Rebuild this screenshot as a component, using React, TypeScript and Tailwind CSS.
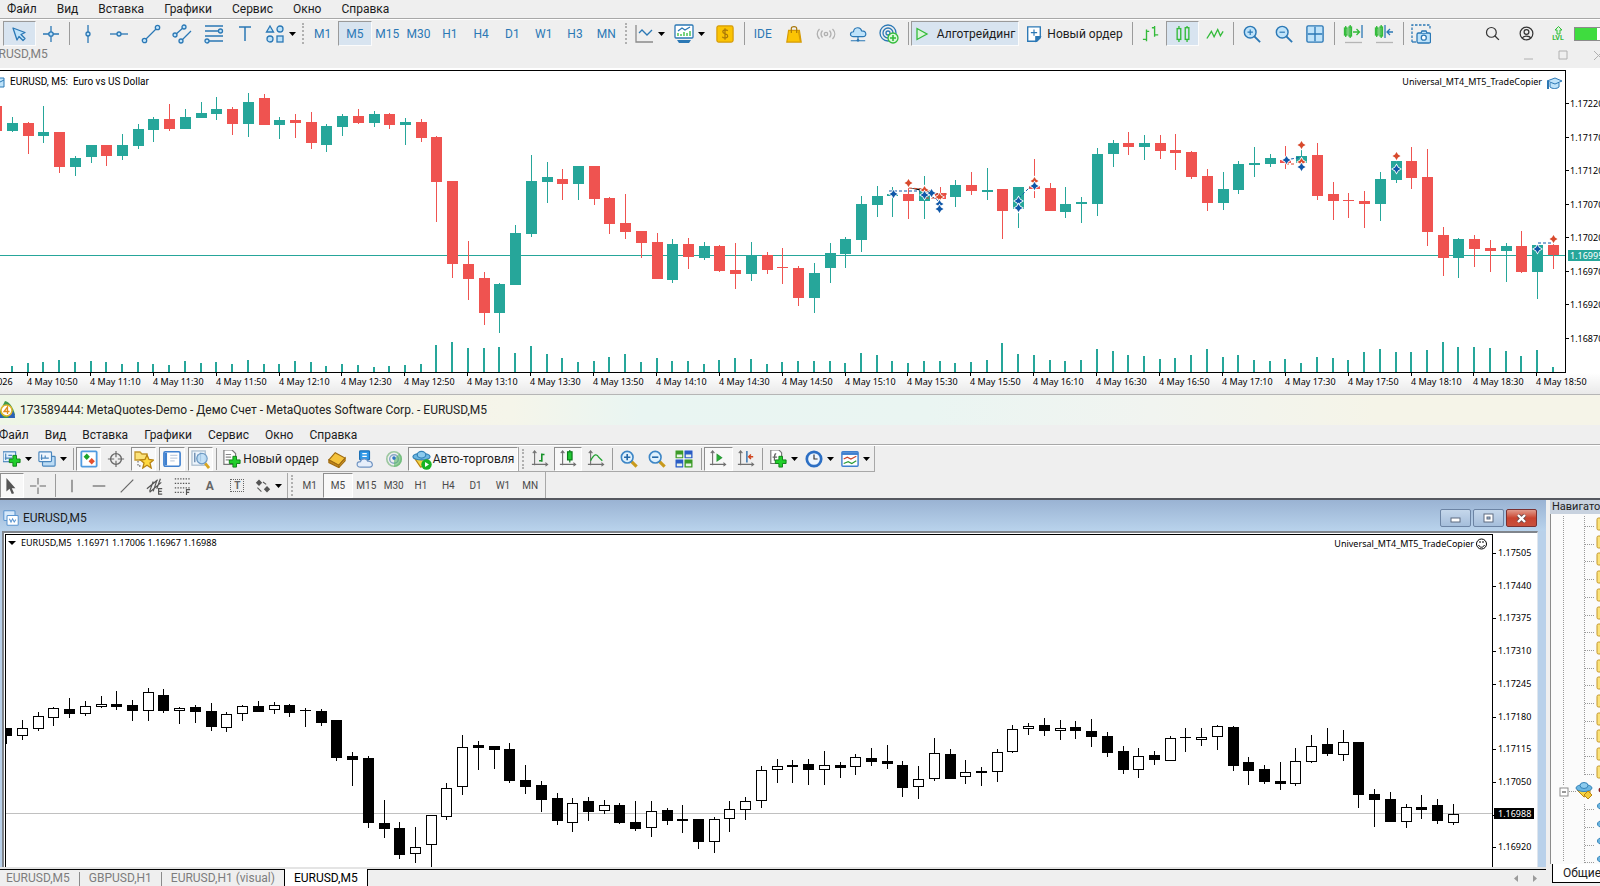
import { ReactNode } from "react";

type Candle = [number, number, number, number, string];

// [high, body top, body bottom, low, "u" | "d"]
const mt5Candles: Candle[] = [
  [106, 106, 131, 131, "d"], [117, 123, 131, 132, "u"], [122, 123, 136, 154, "d"], [106, 132, 136, 143, "u"],
  [132, 132, 167, 173, "d"], [156, 158, 167, 176, "u"], [145, 145, 157, 163, "u"], [145, 145, 156, 166, "d"],
  [134, 145, 156, 160, "u"], [124, 129, 146, 149, "u"], [117, 119, 130, 142, "u"], [104, 119, 129, 131, "d"],
  [109, 117, 129, 129, "u"], [102, 113, 118, 118, "u"], [97, 109, 114, 120, "u"], [107, 109, 124, 135, "d"],
  [93, 102, 124, 137, "u"], [94, 98, 125, 125, "d"], [117, 120, 125, 139, "u"], [114, 120, 123, 138, "d"],
  [112, 122, 143, 149, "d"], [124, 126, 145, 152, "u"], [114, 116, 127, 136, "u"], [109, 116, 123, 124, "d"],
  [111, 114, 123, 127, "u"], [113, 114, 125, 129, "d"], [118, 122, 125, 145, "u"], [119, 122, 138, 142, "d"],
  [136, 137, 182, 222, "d"], [181, 181, 264, 278, "d"], [241, 264, 279, 300, "d"], [272, 278, 313, 325, "d"],
  [283, 284, 313, 333, "u"], [225, 233, 285, 285, "u"], [155, 181, 234, 237, "u"], [162, 177, 182, 203, "u"],
  [169, 179, 184, 200, "d"], [166, 166, 184, 200, "u"], [166, 166, 199, 205, "d"], [197, 198, 224, 234, "d"],
  [194, 223, 232, 239, "d"], [231, 231, 243, 258, "d"], [233, 242, 279, 279, "d"], [239, 244, 280, 283, "u"],
  [238, 244, 257, 269, "d"], [242, 246, 258, 260, "u"], [245, 246, 271, 272, "d"], [243, 270, 274, 289, "d"],
  [242, 255, 274, 281, "u"], [252, 255, 270, 274, "d"], [248, 267, 268, 284, "d"], [266, 268, 298, 306, "d"],
  [263, 273, 298, 313, "u"], [243, 253, 268, 283, "u"], [237, 239, 254, 268, "u"], [196, 204, 240, 252, "u"],
  [186, 196, 205, 217, "u"], [187, 194, 196, 217, "u"], [185, 194, 201, 219, "d"], [176, 190, 201, 219, "u"],
  [187, 193, 199, 203, "d"], [180, 185, 197, 207, "u"], [172, 185, 191, 195, "d"], [168, 190, 192, 200, "u"],
  [189, 189, 211, 239, "d"], [187, 187, 209, 228, "u"], [159, 186, 189, 198, "d"], [183, 188, 211, 211, "d"],
  [187, 204, 212, 218, "u"], [197, 202, 204, 223, "u"], [148, 154, 204, 216, "u"], [140, 143, 154, 167, "u"],
  [132, 143, 147, 155, "d"], [135, 143, 147, 160, "u"], [135, 143, 151, 159, "d"], [134, 150, 153, 170, "d"],
  [151, 152, 177, 179, "d"], [169, 176, 203, 211, "d"], [172, 189, 203, 210, "u"], [161, 164, 190, 194, "u"],
  [147, 163, 165, 177, "u"], [154, 158, 164, 167, "u"], [146, 160, 163, 169, "d"], [149, 156, 163, 172, "u"],
  [143, 155, 196, 200, "d"], [182, 194, 201, 220, "d"], [193, 200, 201, 218, "d"], [191, 201, 204, 228, "d"],
  [172, 179, 204, 221, "u"], [158, 161, 180, 183, "u"], [147, 161, 178, 189, "d"], [149, 177, 232, 246, "d"],
  [227, 235, 258, 276, "d"], [238, 239, 258, 278, "u"], [235, 239, 249, 267, "d"], [240, 248, 251, 272, "d"],
  [243, 246, 251, 282, "u"], [231, 246, 272, 273, "d"], [244, 245, 272, 299, "u"], [242, 245, 255, 269, "d"],
];

const volumes = [
  6, 9, 10, 12, 10, 11, 10, 8, 10, 8, 7, 11, 9, 10, 8, 12, 8, 8, 11, 10, 6, 8, 7, 5, 6, 7, 8, 27, 30, 24, 24, 25, 19,
  26, 18, 14, 10, 11, 15, 18, 10, 14, 11, 11, 8, 12, 14, 13, 8, 10, 11, 11, 11, 9, 19, 17, 11, 9, 11, 11, 9, 10, 12,
  29, 18, 17, 12, 11, 12, 23, 21, 17, 16, 13, 14, 17, 23, 15, 17, 12, 11, 13, 9, 15, 14, 12, 20, 23, 20, 20, 22, 30,
  25, 25, 24, 21, 16, 22, 5,
];

const mt4Candles: Candle[] = [
  [728, 728, 736, 744, "d"], [720, 728, 736, 740, "u"], [712, 716, 729, 731, "u"], [707, 708, 718, 726, "u"],
  [698, 709, 714, 718, "d"], [701, 706, 714, 716, "u"], [696, 704, 706, 708, "u"], [691, 704, 707, 710, "d"],
  [700, 705, 711, 721, "d"], [688, 692, 711, 721, "u"], [689, 695, 711, 713, "d"], [707, 708, 711, 724, "u"],
  [705, 707, 712, 723, "d"], [703, 711, 727, 731, "d"], [712, 714, 728, 732, "u"], [705, 706, 714, 721, "u"],
  [701, 706, 712, 712, "d"], [702, 705, 710, 714, "u"], [704, 705, 713, 717, "d"], [708, 710, 711, 727, "d"],
  [709, 711, 723, 726, "d"], [720, 720, 758, 761, "d"], [752, 756, 760, 786, "d"], [756, 758, 823, 828, "d"],
  [800, 823, 829, 838, "d"], [822, 828, 855, 859, "d"], [827, 847, 854, 863, "u"], [815, 815, 845, 867, "u"],
  [783, 788, 817, 820, "u"], [735, 747, 787, 795, "u"], [741, 745, 748, 770, "d"], [746, 746, 750, 769, "d"],
  [743, 749, 781, 783, "d"], [765, 780, 787, 794, "d"], [781, 785, 800, 812, "d"], [793, 798, 821, 825, "d"],
  [798, 803, 823, 832, "u"], [797, 801, 812, 821, "d"], [800, 805, 811, 814, "u"], [803, 805, 823, 824, "d"],
  [801, 822, 829, 831, "d"], [801, 811, 828, 837, "u"], [808, 810, 821, 825, "d"], [805, 819, 821, 833, "d"],
  [819, 819, 842, 849, "d"], [817, 819, 842, 853, "u"], [801, 809, 819, 832, "u"], [797, 801, 810, 820, "u"],
  [766, 770, 801, 808, "u"], [759, 766, 770, 783, "u"], [760, 765, 767, 783, "d"], [759, 764, 770, 785, "d"],
  [751, 765, 770, 785, "u"], [762, 765, 768, 778, "d"], [754, 757, 767, 775, "u"], [748, 758, 762, 766, "d"],
  [745, 761, 764, 769, "d"], [761, 765, 788, 797, "d"], [766, 779, 787, 799, "u"], [738, 753, 779, 781, "u"],
  [749, 754, 779, 779, "d"], [760, 772, 777, 784, "u"], [767, 771, 773, 786, "d"], [749, 752, 772, 782, "u"],
  [725, 729, 752, 753, "u"], [723, 726, 729, 735, "u"], [718, 725, 731, 736, "d"], [720, 728, 730, 740, "u"],
  [721, 727, 731, 739, "d"], [719, 731, 737, 747, "d"], [732, 736, 753, 757, "d"], [746, 751, 770, 774, "d"],
  [748, 756, 770, 778, "u"], [751, 755, 760, 765, "d"], [736, 738, 761, 761, "u"], [728, 737, 738, 752, "d"],
  [728, 737, 739, 746, "u"], [725, 726, 737, 750, "u"], [726, 727, 766, 771, "d"], [757, 762, 771, 785, "d"],
  [765, 769, 782, 784, "d"], [762, 781, 784, 790, "d"], [748, 761, 784, 786, "u"], [735, 746, 762, 763, "u"],
  [728, 744, 754, 756, "d"], [730, 742, 755, 761, "u"], [742, 742, 795, 808, "d"], [789, 794, 800, 827, "d"],
  [792, 799, 822, 822, "d"], [804, 807, 822, 828, "u"], [795, 807, 810, 819, "d"], [799, 805, 821, 824, "d"],
  [804, 814, 823, 825, "u"],
];

// deals on the MT5 chart: [x, y, "b" | "s"]
const deals: [number, number, string][] = [
  [893, 194, "b"], [908, 183, "s"], [924, 190, "s"], [924, 195, "b"], [931, 193, "b"], [939, 197, "s"],
  [939, 204, "b"], [939, 209, "b"], [1018, 201, "b"], [1018, 208, "b"], [1034, 181, "s"], [1034, 186, "b"],
  [1286, 160, "b"], [1301, 145, "s"], [1301, 162, "s"], [1301, 167, "b"], [1396, 156, "s"], [1396, 169, "b"],
  [1537, 249, "b"], [1553, 239, "s"],
];

const menu = ["Файл", "Вид", "Вставка", "Графики", "Сервис", "Окно", "Справка"];
const mt5Frames = ["M1", "M5", "M15", "M30", "H1", "H4", "D1", "W1", "H3", "MN"];
const mt4Frames = ["M1", "M5", "M15", "M30", "H1", "H4", "D1", "W1", "MN"];
const times = Array.from({ length: 25 }, (_, i) => {
  const m = 10 * 60 + 50 + i * 20;
  return `4 May ${Math.floor(m / 60)}:${m % 60}`;
});
const mt5Prices = ["1.17220", "1.17170", "1.17120", "1.17070", "1.17020", "1.16970", "1.16920", "1.16870"];
const mt4Prices = ["1.17505", "1.17440", "1.17375", "1.17310", "1.17245", "1.17180", "1.17115", "1.17050", "", "1.16920"];

const STEP = 15.722;
const B = "#2b78b5";
const LB = "#bfe3fa";
const G = "#33bb3a";

/* ---------- icons ---------- */

function Icon({ s = 20, children }: { s?: number; children: ReactNode }) {
  return (
    <svg width={s} height={s} viewBox="0 0 20 20" fill="none" stroke={B} strokeWidth="1.3" className="shrink-0">
      {children}
    </svg>
  );
}

function Arrow() {
  return (
    <svg width="7" height="4" viewBox="0 0 7 4" className="shrink-0">
      <path d="M0 0H7L3.5 4Z" fill="#000" />
    </svg>
  );
}

const IcPointer = () => (
  <Icon><path d="M4 4L16 8.5L12 10.5L16 14.500L14 16.500L10 12.500L8 16Z" fill={LB} strokeLinejoin="round" /></Icon>
);
const IcCross = () => (
  <Icon><path d="M10 2V18M2 10H18" /><circle cx="10" cy="10" r="2.2" fill={LB} /></Icon>
);
const IcVLine = () => (
  <Icon><path d="M10 1V19" /><circle cx="10" cy="10" r="2" fill={LB} /></Icon>
);
const IcHLine = () => (
  <Icon><path d="M1 10H19" /><circle cx="10" cy="10" r="2" fill={LB} /></Icon>
);
const IcTrend = () => (
  <Icon><path d="M4 16L16 4" /><circle cx="3.500" cy="16.500" r="2.200" fill={LB} /><circle cx="16.500" cy="3.500" r="2.200" fill={LB} /></Icon>
);
const IcChannel = () => (
  <Icon>
    <path d="M3 11L12 3M9 17L19 7" />
    <circle cx="3" cy="11" r="2" fill={LB} /><circle cx="12" cy="3" r="2" fill={LB} /><circle cx="9" cy="17" r="2" fill={LB} />
  </Icon>
);
const IcFibo = () => (
  <Icon>
    <path d="M1 2H19M1 7H15M1 12H19M5 17H19" />
    <circle cx="16.500" cy="7" r="2" fill={LB} /><circle cx="3" cy="17" r="2" fill={LB} />
  </Icon>
);
const IcText = () => (
  <Icon><path d="M4 3H16M10 3V17" strokeWidth="1.500" /></Icon>
);
const IcShapes = () => (
  <Icon>
    <path d="M1.500 8L5 2L8.500 8Z" fill={LB} /><circle cx="15" cy="5" r="3" fill={LB} />
    <circle cx="5" cy="15" r="3" fill={LB} /><rect x="12" y="12" width="6" height="6" fill={LB} />
  </Icon>
);
const IcLineChart = () => (
  <Icon>
    <path d="M2 1V18H19" stroke="#8b8b8b" /><path d="M5 9L8 6L13 11L18 6" />
  </Icon>
);
const IcTemplate = () => (
  <Icon>
    <rect x="1" y="1" width="18" height="13" rx="1" fill="#fff" />
    <path d="M4 7L8 4L11 6L16 3" /><path d="M4 12V9M7 12V10M10 12V8M13 12V9M16 12V7" stroke={G} />
    <path d="M3 16H17L15 19H5Z" fill={B} stroke="none" />
  </Icon>
);
const IcDollar = () => (
  <Icon s={18}>
    <rect x="1" y="1" width="18" height="18" rx="2" fill="#fbc404" stroke="#d59a05" />
    <path d="M13 6.500C12 5 7.500 5 7.500 7.500C7.500 10.500 13 9 13 12.200C13 15 8 15 7 13M10 3.500V16.500" stroke="#a87608" />
  </Icon>
);
const IcBag = () => (
  <Icon s={18}>
    <path d="M4 6H16L18 19H2Z" fill="#fbc404" stroke="#d59a05" /><path d="M7 9V4C7 1 13 1 13 4V9" stroke="#a87608" />
    <path d="M15 7L17 18" stroke="#d59a05" />
  </Icon>
);
const IcSignal = () => (
  <Icon>
    <g stroke="#b0b0b0">
      <circle cx="10" cy="10" r="1.700" /><path d="M6.500 6.500C4.800 8.500 4.800 11.500 6.500 13.500M13.500 6.500C15.200 8.500 15.200 11.500 13.500 13.500" />
      <path d="M3.500 5C.5 8 .5 12 3.500 15M16.500 5C19.500 8 19.500 12 16.500 15" />
    </g>
  </Icon>
);
const IcCloud = () => (
  <Icon s={18}>
    <path d="M5 13C.5 13 .5 7.500 5 7.500C5.500 2 13 1.500 14 6.500C20 6.500 20 13 15.500 13Z" fill={LB} />
    <path d="M10 13V17M2 17.500H18" /><circle cx="10" cy="17" r="1.500" fill={B} stroke="none" />
  </Icon>
);
const IcTarget = () => (
  <Icon>
    <circle cx="9" cy="9" r="8" /><circle cx="9" cy="9" r="5" /><circle cx="9" cy="9" r="2" />
    <circle cx="14" cy="14" r="5" fill="#d9f7d9" stroke={G} /><path d="M14 11V17M11 14H17" stroke={G} strokeWidth="1.600" />
  </Icon>
);
const IcDoc = () => (
  <Icon s={18}>
    <path d="M3 2H17V14L13 18H3Z" fill="#fff" strokeWidth="1.500" /><path d="M17 13H12V18Z" fill={B} /><path d="M10 5V12M6.500 8.500H13.500" />
  </Icon>
);
const IcBars = () => (
  <Icon s={18}><path d="M5 5V18M1 16H5M5 7H8M14 1V13M11 3H14M14 11H18" stroke={G} strokeWidth="1.500" /></Icon>
);
const IcCandles = () => (
  <Icon s={18}>
    <g stroke={G} strokeWidth="1.500"><path d="M5.500 1V4M5.500 16V19M14.500 1V3M14.500 16V19" /><rect x="3.500" y="4" width="4" height="12" /><rect x="12.500" y="3" width="4" height="13" /></g>
  </Icon>
);
const IcZig = () => (
  <Icon s={18}><path d="M1 15L6 7L9 13L13 5L16 12L19 7" stroke={G} strokeWidth="1.500" /></Icon>
);
const IcZoom = ({ plus }: { plus?: boolean }) => (
  <Icon s={18}>
    <path d="M12.500 12.500L19 19" strokeWidth="2" /><circle cx="8" cy="8" r="6.500" fill={LB} strokeWidth="1.600" />
    <path d={plus ? "M8 5V11M5 8H11" : "M5 8H11"} />
  </Icon>
);
const IcGrid = () => (
  <Icon s={18}><rect x="1" y="1" width="18" height="18" rx="1.500" fill={LB} strokeWidth="1.500" /><path d="M10 2V18M2 10H18" strokeWidth="1.500" /></Icon>
);
const IcShift = ({ left }: { left?: boolean }) => (
  <Icon>
    <g stroke={G}><rect x="1.500" y="4" width="2.500" height="7" /><rect x="6" y="3" width="2.500" height="9" /><path d="M2.700 2V13M7.200 1V14" /></g>
    {left ? (
      <><path d="M11 1V14M19 8H13M16 5L13 8L16 11" /></>
    ) : (
      <><path d="M10 8H16M13.500 5L16.500 8L13.500 11" stroke={G} /><path d="M19 1V14" /></>
    )}
    <path d="M2 18.500H19" stroke="#b5b5b5" />
  </Icon>
);
const IcCamera = () => (
  <Icon s={20}>
    <path d="M1 18V1H19V6" strokeDasharray="2.500 1.500" /><path d="M1 18H5" />
    <rect x="6" y="9" width="13.500" height="10" rx="1.500" fill={LB} /><path d="M10 9L11 7H15L16 9" fill={LB} /><circle cx="12.800" cy="13.700" r="2.500" fill="#fff" />
  </Icon>
);

// chart axes used by the MT4 chart type icons
const Axes = () => <path d="M4 1V17M2 3.500L4 1L6 3.500M1 16H18M16 14L18.500 16L16 18" stroke="#707070" strokeWidth="1.200" />;

function Plus({ x = 13, y = 13 }: { x?: number; y?: number }) {
  return (
    <path
      d={`M${x - 2} ${y - 6}H${x + 2}V${y - 2}H${x + 6}V${y + 2}H${x + 2}V${y + 6}H${x - 2}V${y + 2}H${x - 6}V${y - 2}H${x - 2}Z`}
      fill="#21cf2b" stroke="#0b7d14" strokeWidth="1"
    />
  );
}

const Ic4New = () => (
  <Icon s={18}><rect x="0" y="2" width="14" height="11" fill="#e5f2fd" stroke="#4a86bd" /><path d="M3 4V11M2 9H10M6 6H10" stroke="#4a86bd" /><Plus y={12} /></Icon>
);
const Ic4Windows = () => (
  <Icon s={18}>
    <rect x="5" y="7" width="14" height="11" rx="1" fill="#bcdcf5" stroke="#4a86bd" /><rect x="1" y="2" width="14" height="11" rx="1" fill="#eff7fe" stroke="#4a86bd" />
    <path d="M4 5V11M3 9H12M8 6V9" stroke="#4a86bd" />
  </Icon>
);
const Ic4Market = () => (
  <Icon s={18}>
    <rect x="1.500" y="1.500" width="17" height="17" rx="1" fill="#fff" stroke="#4f9be0" strokeWidth="2" />
    <path d="M7.500 4L11 7.500L7.500 11L4 7.500Z" fill="#1ca42a" stroke="none" /><path d="M13 9L16.500 12.500L13 16L9.500 12.500Z" fill="#e4502d" stroke="none" />
  </Icon>
);
const Ic4Aim = () => (
  <Icon s={18}><circle cx="10" cy="10" r="6" stroke="#6a6a6a" strokeWidth="1.600" /><path d="M10 1V8M10 12V19M1 10H8M12 10H19" stroke="#6a6a6a" /></Icon>
);
const Ic4Folder = () => (
  <Icon s={20}>
    <path d="M1 3H6L8 5H13V11H1Z" fill="#fbe27a" stroke="#c4972b" /><path d="M4 12V17H8" stroke="#777" strokeDasharray="1.500 1.500" />
    <path d="M13 6L15 10.500L19.500 11L16 14L17.200 19L13 16.300L8.800 19L10 14L6.500 11L11 10.500Z" fill="#ffd940" stroke="#b98412" />
  </Icon>
);
const Ic4Terminal = () => (
  <Icon s={18}>
    <rect x="1" y="2" width="18" height="16" rx="1.500" fill="#fff" stroke="#3f80cf" strokeWidth="1.800" /><path d="M3 3V17" stroke="#3f80cf" strokeWidth="3" />
    <path d="M8 6H16M8 9H16M8 12H13" stroke="#c3cfe0" />
  </Icon>
);
const Ic4Tester = () => (
  <Icon s={19}>
    <rect x="1" y="1" width="14" height="15" fill="#edf4fb" stroke="#a9bccd" /><path d="M4 3V13M7 5V11M10 3V12" stroke="#5a7fa6" />
    <circle cx="11.500" cy="9" r="5.500" fill="#b9dcf6cc" stroke="#6f9bc4" /><path d="M15 14L19 19" stroke="#d9a520" strokeWidth="3" />
  </Icon>
);
const Ic4Order = () => (
  <Icon s={18}><path d="M1 0H10L14 4V16H1Z" fill="#fff" stroke="#777" /><path d="M3 5H9M3 8H9M3 11H7" stroke="#888" /><Plus y={13} /></Icon>
);
const Ic4Gold = () => (
  <Icon s={18}>
    <path d="M1 11L8 3L19 9L12 17Z" fill="#f5c33c" stroke="#9f6b10" /><path d="M1 11V14L12 19.500V17Z" fill="#c78a1c" stroke="#9f6b10" /><path d="M12 17L19 9V12L12 19.500Z" fill="#e0a730" stroke="#9f6b10" />
  </Icon>
);
const Ic4Cloud = () => (
  <Icon s={18}>
    <rect x="4" y="1" width="11" height="10" rx="1" fill="#2f98e8" stroke="#1c6fb5" /><path d="M7 4H12M7 7H12" stroke="#fff" />
    <path d="M5 19C0 19 0 13 5 13C6 9 12 9 13 12.500C19 12 20 19 15 19Z" fill="#e6eefa" stroke="#6f93c2" />
  </Icon>
);
const Ic4Signal = () => (
  <Icon s={18}>
    <circle cx="10" cy="10" r="8" stroke="#9cc8a0" strokeWidth="1.800" /><circle cx="10" cy="10" r="4.800" stroke="#8aa9c7" strokeWidth="1.600" />
    <path d="M10 10V19A9 9 0 0 0 19 10A8 8 0 0 0 16 4Z" fill="#58b868" stroke="none" opacity=".6" /><circle cx="10" cy="9" r="2" fill="#2f76c4" stroke="none" />
  </Icon>
);
const Hat = () => (
  <Icon s={19}>
    <path d="M3 9H17L13 17L9 18Z" fill="#f6d545" stroke="#b98412" /><ellipse cx="10" cy="7" rx="9" ry="3.500" fill="#6bb6e2" stroke="#3583b8" />
    <ellipse cx="10" cy="5" rx="4.500" ry="3.500" fill="#8ccbee" stroke="#3583b8" />
  </Icon>
);
const Ic4Auto = () => (
  <span className="relative flex">
    <Hat />
    <svg width="11" height="11" viewBox="0 0 11 11" className="absolute -right-px -bottom-px"><circle cx="5.500" cy="5.500" r="5.200" fill="#19b324" /><path d="M4 3L8 5.500L4 8Z" fill="#fff" /></svg>
  </span>
);
const Ic4Bars = () => (
  <Icon s={18}><Axes /><path d="M12 4V13M12 5H15M9 12H12" stroke="#17922a" strokeWidth="1.800" /></Icon>
);
const Ic4Candle = () => (
  <Icon s={18}><Axes /><path d="M12 0V14" stroke="#0a7a1a" /><rect x="9.500" y="2" width="5" height="9" fill="#23c834" stroke="#0a7a1a" /></Icon>
);
const Ic4Line = () => (
  <Icon s={18}><Axes /><path d="M4 12C8 4 11 4 13 8L17 12" stroke="#23a334" strokeWidth="1.500" /></Icon>
);
const Ic4Zoom = ({ plus }: { plus?: boolean }) => (
  <Icon s={18}>
    <path d="M12 12L18.500 18.500" stroke="#c99a1c" strokeWidth="3.500" /><circle cx="8" cy="8" r="6.500" fill="#dff1fd" stroke="#3d86c6" strokeWidth="1.800" />
    <path d={plus ? "M8 4.500V11.500M4.500 8H11.500" : "M4.500 8H11.500"} stroke="#2467a8" strokeWidth="1.800" />
  </Icon>
);
const Ic4Tiles = () => (
  <Icon s={18}>
    <g strokeWidth="1" stroke="#fff">
      <rect x="0" y="0" width="10" height="10" fill="#3c9a28" /><rect x="10" y="0" width="10" height="10" fill="#2a5cc4" />
      <rect x="0" y="10" width="10" height="10" fill="#2a5cc4" /><rect x="10" y="10" width="10" height="10" fill="#3c9a28" />
    </g>
    <path d="M2 5H8V8H2ZM12 5H18V8H12ZM2 15H8V18H2ZM12 15H18V18H12Z" fill="#e9f3e6" stroke="none" />
  </Icon>
);
const Ic4Scroll = () => (
  <Icon s={18}><Axes /><path d="M9 5L14 8.500L9 12Z" fill="#20b52e" stroke="#2a9a37" /></Icon>
);
const Ic4Shift = () => (
  <Icon s={18}><Axes /><path d="M11 1V14" stroke="#2467a8" strokeWidth="1.500" /><path d="M18 7.500H13M15.500 5L13 7.500L15.500 10" stroke="#d0431c" strokeWidth="1.600" /></Icon>
);
const Ic4Ind = () => (
  <Icon s={18}><path d="M2 0H11L14 3V15H2Z" fill="#fff" stroke="#777" /><path d="M8 4C6 4 6 6 6 12M4 8H9" stroke="#666" /><Plus y={13} /></Icon>
);
const Ic4Clock = () => (
  <Icon s={18}><circle cx="10" cy="10" r="8" fill="#eef6fe" stroke="#2c6fc4" strokeWidth="3" /><path d="M10 5V10H14" stroke="#333" /></Icon>
);
const Ic4Tpl = () => (
  <Icon s={18}>
    <rect x="1" y="2" width="18" height="16" rx="1" fill="#fff" stroke="#3f80cf" strokeWidth="1.600" /><path d="M1 4H19" stroke="#3f80cf" strokeWidth="3" />
    <path d="M3 10L7 8L11 10L17 7" stroke="#c9442b" /><path d="M3 15L8 13L12 15L17 12" stroke="#2a9a37" />
  </Icon>
);

/* ---------- toolbar parts ---------- */

function Sep() {
  return (
    <span className="flex w-[6px] shrink-0 justify-center self-stretch py-px">
      <span className="w-px bg-[#9b9b9b]" />
    </span>
  );
}

function Grip() {
  return (
    <span className="flex w-2 shrink-0 justify-center self-stretch py-0.5">
      <span className="border-l-2 border-dotted border-[#b0b0b0]" />
    </span>
  );
}

function Btn({ on, label, className = "", children }: { on?: boolean; label?: string; className?: string; children: ReactNode }) {
  return (
    <button
      aria-label={label}
      className={`flex items-center justify-center self-stretch whitespace-nowrap ${
        on ? "border border-[#fbfbfb] border-t-[#9a9a9a] border-l-[#9a9a9a] bg-[#d8e4f0]" : ""
      } ${className}`}
    >
      {children}
    </button>
  );
}

function Btn4({ on, label, className = "", children }: { on?: boolean; label?: string; className?: string; children: ReactNode }) {
  return (
    <button
      aria-label={label}
      className={`flex items-center justify-center self-stretch whitespace-nowrap ${
        on ? "border border-white border-t-[#8f8f8f] border-l-[#8f8f8f] bg-[#f8f8f8]" : ""
      } ${className}`}
    >
      {children}
    </button>
  );
}

function Menu({ className }: { className: string }) {
  return (
    <nav className={`flex items-center border-b border-[#a8a8a8] text-xs text-[#1c1c1c] ${className}`}>
      {menu.map((m) => (
        <button key={m} className="leading-4">{m}</button>
      ))}
    </nav>
  );
}

/* ---------- charts ---------- */

function Deal({ x, y, side }: { x: number; y: number; side: string }) {
  return (
    <path
      d="M0 -4L1.500 -1.500L4 0L1.500 1.500L0 4L-1.500 1.500L-4 0L-1.500 -1.500Z"
      transform={`translate(${x + 0.5} ${y})`} fill={side === "b" ? "#0f57a8" : "#d8492c"}
      stroke="#fff" strokeWidth="1.500" paintOrder="stroke"
    />
  );
}

function Mt5Chart() {
  return (
    <svg
      viewBox="0 70 1600 324" preserveAspectRatio="xMaxYMin slice"
      className="block h-[324px] w-full bg-white font-['Noto_Sans','DejaVu_Sans',sans-serif] text-[9px]"
    >
      <defs>
        <linearGradient id="axis" x1="0" y1="0" x2="0" y2="1">
          <stop offset="0" stopColor="#fff" /><stop offset="1" stopColor="#e9e9e9" />
        </linearGradient>
      </defs>
      <rect x="0" y="373" width="1600" height="21" fill="url(#axis)" />
      <g shapeRendering="crispEdges">
        <rect x="0" y="255" width="1565" height="1" fill="#26a69a" />
        {mt5Candles.map(([h, t, b, l, k], i) => {
          const x = Math.round(12 + (i - 1) * STEP);
          return (
            <g key={i} fill={k === "u" ? "#26a69a" : "#ef5350"}>
              <rect x={x} y={h} width="1" height={Math.max(l - h, 1)} />
              <rect x={x - 5} y={t} width="11" height={Math.max(b - t, 1)} />
            </g>
          );
        })}
        {volumes.map((v, i) => (
          <rect key={i} x={Math.round(11 + i * STEP)} y={372 - v} width="2" height={v} fill="#26a69a" />
        ))}
        <rect x="0" y="70" width="1566" height="1" fill="#000" />
        <rect x="1565" y="70" width="1" height="303" fill="#000" />
        <rect x="0" y="372" width="1566" height="1" fill="#000" />
        {times.map((t, i) => (
          <rect key={t} x={Math.round(27 + i * STEP * 4)} y="373" width="1" height="3" fill="#000" />
        ))}
        {mt5Prices.map((p, i) => (
          <rect key={p} x="1566" y={Math.round(103 + i * 33.57)} width="3" height="1" fill="#000" />
        ))}
      </g>
      <g strokeDasharray="3 2" strokeWidth="1">
        <path d="M889 191H920M924 191L940 202M1019 198L1034 183M1286 160L1302 157M1538 243H1553" stroke="#0f57a8" />
        <path d="M909 188L924 189L944 196M924 194H948M926 198H942M1286 164H1296" stroke="#d8492c" />
      </g>
      {deals.map(([x, y, side], i) => (
        <Deal key={i} x={x} y={y} side={side} />
      ))}
      <text x="-8" y="385">2026</text>
      {times.map((t, i) => (
        <text key={t} x={Math.round(27 + i * STEP * 4)} y="385">{t}</text>
      ))}
      {mt5Prices.map((p, i) => (
        <text key={p} x="1570" y={Math.round(107 + i * 33.57)}>{p}</text>
      ))}
      <rect x="1568" y="250" width="32" height="11" fill="#26a69a" />
      <text x="1570" y="259" fill="#fff">1.16995</text>
      <path d="M0 78H4V87H0M0 82L4 80" stroke={B} fill={LB} />
      <text x="10" y="85" className="font-['Roboto','Noto_Sans',sans-serif] text-[10px] whitespace-pre">{"EURUSD, M5:  Euro vs US Dollar"}</text>
      <text x="1542" y="85" textAnchor="end">Universal_MT4_MT5_TradeCopier</text>
      <path d="M1550 83V87C1552 89 1557 89 1559 87V83" fill={LB} stroke={B} />
      <path d="M1547 81L1555 78L1562 81L1555 84Z" fill={LB} stroke={B} /><path d="M1548 81V89" stroke={B} strokeWidth="2" />
    </svg>
  );
}

function Mt4Chart() {
  return (
    <svg
      viewBox="4 533 1533 334" preserveAspectRatio="xMaxYMin slice"
      className="block h-[334px] w-full bg-white font-['Noto_Sans','DejaVu_Sans',sans-serif] text-[9px]"
    >
      <g shapeRendering="crispEdges">
        <rect x="6" y="813" width="1487" height="1" fill="#c0c0c0" />
        {mt4Candles.map(([h, t, b, l, k], i) => {
          const x = Math.round(22 + (i - 1) * STEP);
          const body = Math.max(b - t, k === "u" ? 3 : 1);
          return (
            <g key={i}>
              <rect x={x} y={h} width="1" height={Math.max(l - h, 1)} fill="#000" />
              <rect x={x - 5} y={t} width="11" height={body} fill="#000" />
              {k === "u" && <rect x={x - 4} y={t + 1} width="9" height={body - 2} fill="#fff" />}
            </g>
          );
        })}
        <rect x="4" y="533" width="1" height="334" fill="#fff" />
        <rect x="5" y="534" width="1488" height="1" fill="#000" />
        <rect x="5" y="534" width="1" height="334" fill="#000" />
        <rect x="1492" y="534" width="1" height="334" fill="#000" />
        {mt4Prices.map((p, i) => (
          <rect key={i} x="1493" y={Math.round(553 + i * 32.7)} width="3" height="1" fill="#000" />
        ))}
      </g>
      {mt4Prices.map((p, i) => (
        <text key={i} x="1498" y={Math.round(556 + i * 32.7)}>{p}</text>
      ))}
      <rect x="1494" y="808" width="40" height="11" fill="#000" />
      <text x="1498" y="817" fill="#fff">1.16988</text>
      <path d="M8 541H16L12 545Z" fill="#000" />
      <text x="21" y="546" className="whitespace-pre">{"EURUSD,M5  1.16971 1.17006 1.16967 1.16988"}</text>
      <text x="1474" y="547" textAnchor="end">Universal_MT4_MT5_TradeCopier</text>
      <g fill="none" stroke="#000"><circle cx="1481.500" cy="544" r="5" /><path d="M1478.500 545C1480 548 1483 548 1484.500 545M1480 541V543M1483 541V543" /></g>
    </svg>
  );
}

/* ---------- windows ---------- */

function Mt5() {
  return (
    <section className="bg-[#efefef]">
      <Menu className="h-[19px] gap-5 pb-px pl-[7px]" />
      <div className="flex h-7 items-center border-t border-white pt-px pb-px pl-[3px] text-xs text-[#2b78b5]">
        <div className="flex w-[63px] self-stretch">
          <Btn on label="Курсор" className="flex-1"><IcPointer /></Btn>
          <Btn label="Перекрестие" className="flex-1"><IcCross /></Btn>
        </div>
        <Sep />
        <div className="flex w-[189px] self-stretch">
          {[IcVLine, IcHLine, IcTrend, IcChannel, IcFibo, IcText].map((I, i) => (
            <Btn key={i} className="flex-1"><I /></Btn>
          ))}
        </div>
        <Btn label="Объекты" className="w-[38px] gap-1"><IcShapes /><Arrow /></Btn>
        <Grip />
        <div className="flex w-[315px] self-stretch">
          {mt5Frames.map((f) => (
            <Btn key={f} on={f === "M5"} className="min-w-0 flex-1">{f}</Btn>
          ))}
        </div>
        <Grip />
        <Btn label="График" className="w-[39px] gap-1"><IcLineChart /><Arrow /></Btn>
        <Btn label="Шаблоны" className="w-10 gap-1"><IcTemplate /><Arrow /></Btn>
        <Btn label="Депозит" className="w-8"><IcDollar /></Btn>
        <Sep />
        <div className="flex w-[158px] self-stretch">
          <Btn className="flex-1">IDE</Btn>
          {[IcBag, IcSignal, IcCloud, IcTarget].map((I, i) => (
            <Btn key={i} className="flex-1"><I /></Btn>
          ))}
        </div>
        <Sep />
        <Btn on className="w-[108px] gap-2 text-[#1c1c1c]">
          <svg width="14" height="14" viewBox="0 0 14 14" className="shrink-0"><path d="M2 1.500L12 7L2 12.500Z" fill="#d9f7d9" stroke={G} strokeWidth="1.300" /></svg>
          Алготрейдинг
        </Btn>
        <Btn className="w-[110px] gap-1 text-[#1c1c1c]"><IcDoc />Новый ордер</Btn>
        <Sep />
        <div className="flex w-[95px] self-stretch">
          <Btn label="Бары" className="flex-1"><IcBars /></Btn>
          <Btn on label="Свечи" className="flex-1"><IcCandles /></Btn>
          <Btn label="Линия" className="flex-1"><IcZig /></Btn>
        </div>
        <Sep />
        <div className="flex w-[95px] self-stretch">
          <Btn label="Увеличить" className="flex-1"><IcZoom plus /></Btn>
          <Btn label="Уменьшить" className="flex-1"><IcZoom /></Btn>
          <Btn label="Окна" className="flex-1"><IcGrid /></Btn>
        </div>
        <Sep />
        <div className="flex w-[63px] self-stretch">
          <Btn label="Автопрокрутка" className="flex-1"><IcShift /></Btn>
          <Btn label="Сдвиг" className="flex-1"><IcShift left /></Btn>
        </div>
        <Sep />
        <Btn label="Снимок" className="w-[30px]"><IcCamera /></Btn>
        <div className="ml-auto flex items-center self-stretch overflow-hidden">
          <Btn label="Поиск" className="w-9">
            <Icon s={15}><circle cx="8.500" cy="8.500" r="6.500" stroke="#333" strokeWidth="1.600" /><path d="M13 13L18.500 18.500" stroke="#333" strokeWidth="1.800" /></Icon>
          </Btn>
          <Btn label="Профиль" className="w-8">
            <Icon s={15}><g stroke="#333" strokeWidth="1.600"><circle cx="10" cy="10" r="8.500" /><circle cx="10" cy="8" r="3.200" /><path d="M4.500 16C6 12.500 14 12.500 15.500 16" /></g></Icon>
          </Btn>
          <span className="flex w-8 flex-col items-center text-[7px] leading-[7px] font-bold text-[#33bb3a]">
            <svg width="9" height="9" viewBox="0 0 9 9"><path d="M4.500 .5L8 4H6V8H3V4H1Z" fill="#d9f7d9" stroke={G} /></svg>
            LVL
          </span>
          <span className="flex h-[14px] w-[26px] border border-r-0 border-[#8b8b8b] bg-white"><span className="w-[22px] bg-[#3fdc3f]" /></span>
        </div>
      </div>
      <div className="flex h-[21px] items-start justify-between overflow-hidden pb-1 text-xs leading-[14px] text-[#7d7d7d]">
        <span className="-ml-4">EURUSD,M5</span>
        <span className="-mr-1 flex items-center gap-6 pt-[3px]">
          {["M1 9H10", "M1 1H9V9H1Z", "M1 1L10 10M10 1L1 10"].map((d) => (
            <svg key={d} width="11" height="11" viewBox="0 0 11 11" fill="none" stroke="#b0b0b0"><path d={d} /></svg>
          ))}
        </span>
      </div>
      <div className="h-[2px] bg-white" />
      <Mt5Chart />
    </section>
  );
}

function Mt4Toolbars() {
  return (
    <>
      <div className="flex h-[26px] w-[875px] items-center border-r border-b border-[#a8a8a8] pt-px text-xs text-[#1c1c1c]">
        <Btn4 label="Новый график" className="w-[34px] gap-1"><Ic4New /><Arrow /></Btn4>
        <Btn4 label="Профили" className="w-9 gap-1"><Ic4Windows /><Arrow /></Btn4>
        <Sep />
        <div className="flex w-[137px] gap-[3px] self-stretch">
          <Btn4 on label="Обзор рынка" className="min-w-0 flex-1"><Ic4Market /></Btn4>
          <Btn4 label="Окно данных" className="min-w-0 flex-1"><Ic4Aim /></Btn4>
          <Btn4 on label="Навигатор" className="min-w-0 flex-1"><Ic4Folder /></Btn4>
          <Btn4 on label="Терминал" className="min-w-0 flex-1"><Ic4Terminal /></Btn4>
          <Btn4 on label="Тестер" className="min-w-0 flex-1"><Ic4Tester /></Btn4>
        </div>
        <Sep />
        <Btn4 className="w-[104px] gap-0.5"><Ic4Order />Новый ордер</Btn4>
        <div className="flex w-[85px] self-stretch">
          {[Ic4Gold, Ic4Cloud, Ic4Signal].map((I, i) => (
            <Btn4 key={i} className="flex-1"><I /></Btn4>
          ))}
        </div>
        <Btn4 on className="w-[110px] gap-0.5"><Ic4Auto />Авто-торговля</Btn4>
        <span className="w-px self-stretch bg-[#a8a8a8]" />
        <Grip />
        <div className="flex w-[82px] self-stretch">
          <Btn4 label="Бары" className="flex-1"><Ic4Bars /></Btn4>
          <Btn4 on label="Свечи" className="flex-1"><Ic4Candle /></Btn4>
          <Btn4 label="Линия" className="flex-1"><Ic4Line /></Btn4>
        </div>
        <Sep />
        <div className="flex w-[83px] self-stretch">
          <Btn4 label="Увеличить" className="flex-1"><Ic4Zoom plus /></Btn4>
          <Btn4 label="Уменьшить" className="flex-1"><Ic4Zoom /></Btn4>
          <Btn4 label="Окна" className="flex-1"><Ic4Tiles /></Btn4>
        </div>
        <Sep />
        <div className="flex w-[55px] self-stretch">
          <Btn4 on label="Автопрокрутка" className="flex-1"><Ic4Scroll /></Btn4>
          <Btn4 label="Сдвиг" className="flex-1"><Ic4Shift /></Btn4>
        </div>
        <Sep />
        {[Ic4Ind, Ic4Clock, Ic4Tpl].map((I, i) => (
          <Btn4 key={i} className="w-9 gap-1"><I /><Arrow /></Btn4>
        ))}
      </div>
      <div className="flex h-[26px] w-[546px] items-center border-r border-[#a8a8a8] pt-px text-[10px] text-[#4a4a4a]">
        <Btn4 on label="Курсор" className="w-6 pr-1">
          <Icon s={18}><path d="M6 1V16L9.500 13L12 19L14.500 18L12 12.500H16Z" fill="#555" stroke="none" /></Icon>
        </Btn4>
        <Btn4 label="Перекрестие" className="w-7">
          <Icon s={16}><path d="M10 0V8M10 12V20M0 10H8M12 10H20" stroke="#666" /></Icon>
        </Btn4>
        <Sep />
        <div className="flex w-[193px] self-stretch">
          {["M10 3V17", "M3 10H17", "M3 17L17 3"].map((d) => (
            <Btn4 key={d} className="flex-1"><Icon s={18}><path d={d} stroke="#666" /></Icon></Btn4>
          ))}
          <Btn4 label="Канал" className="flex-1">
            <Icon s={18}><path d="M1 13L13 3M4 17L17 6M4 16L8 5M8 16L12 4M12 13L16 2" stroke="#555" /><path d="M18 13H14V19H18M14 16H17.500" stroke="#555" /></Icon>
          </Btn4>
          <Btn4 label="Фибоначчи" className="flex-1">
            <Icon s={18}><path d="M2 2H19M2 7H19M2 12H19M2 17H12" stroke="#555" strokeDasharray="1.500 1.500" /><path d="M19 14H15V20M15 17H18" stroke="#555" /></Icon>
          </Btn4>
          <Btn4 className="flex-1 text-xs font-bold text-[#666]">A</Btn4>
          <Btn4 className="flex-1"><span className="border border-dotted border-[#666] px-[3px] text-[10px] leading-[11px] font-bold text-[#666]">T</span></Btn4>
        </div>
        <Btn4 label="Стрелки" className="w-[34px] gap-1">
          <Icon s={16}><path d="M5 2L9 6L5 10L1 6ZM15 10L19 14L15 18L11 14Z" fill="#555" stroke="none" /><path d="M3 12L8 17M10 5L14 8" stroke="#555" /></Icon>
          <Arrow />
        </Btn4>
        <span className="ml-[2px] w-px self-stretch bg-[#a8a8a8]" />
        <Grip />
        <div className="flex w-[248px] self-stretch">
          {mt4Frames.map((f) => (
            <Btn4 key={f} on={f === "M5"} className="min-w-0 flex-1">{f}</Btn4>
          ))}
        </div>
      </div>
    </>
  );
}

function ChartWindow() {
  return (
    <div className="flex min-w-0 flex-1 flex-col">
      <div className="bg-[#b9d1ea] pr-2 pl-[2px]">
        <div className="-mr-2 -ml-[2px] flex h-[31px] items-center gap-1 bg-linear-to-b from-[#9ab3d3] to-[#b9d3ec] pt-[5px] pr-[9px] pl-[3px]">
          <Icon s={16}>
            <rect x="1" y="1" width="14" height="12" rx="1" fill="#d6e9fb" stroke="#5b95d0" /><rect x="5" y="7" width="14" height="12" rx="1" fill="#fff" stroke="#5b95d0" />
            <path d="M8 11L10 15L12 11L14 15L16 12" stroke="#5b95d0" />
          </Icon>
          <span className="text-xs text-[#1c1c1c]">EURUSD,M5</span>
          <div className="ml-auto flex gap-[2px]">
            <button aria-label="Свернуть" className="flex h-[18px] w-[31px] items-center justify-center rounded-[2px] border border-[#6c84a4] bg-linear-to-b from-[#c5d7eb] to-[#a5bedb]">
              <svg width="11" height="10"><rect x="1" y="5" width="9" height="4" fill="#fff" stroke="#5d6b80" /></svg>
            </button>
            <button aria-label="Развернуть" className="flex h-[18px] w-[31px] items-center justify-center rounded-[2px] border border-[#6c84a4] bg-linear-to-b from-[#c5d7eb] to-[#a5bedb]">
              <svg width="11" height="10"><rect x="1" y="1" width="9" height="8" fill="#fff" stroke="#5d6b80" /><rect x="4" y="4" width="3" height="2" fill="#a5bedb" stroke="#5d6b80" /></svg>
            </button>
            <button aria-label="Закрыть" className="flex h-[18px] w-[31px] items-center justify-center rounded-[2px] border border-[#7a3030] bg-linear-to-b from-[#e09a8c] via-[#c9432f] to-[#c8503c]">
              <svg width="11" height="9" viewBox="0 0 11 9"><path d="M2 1L9 8M9 1L2 8" stroke="#6b4a4a" strokeWidth="4" /><path d="M2 1L9 8M9 1L2 8" stroke="#fff" strokeWidth="2.400" /></svg>
            </button>
          </div>
        </div>
        <div className="border-t-2 border-r border-l-2 border-[#80858c] border-r-[#dfe6ee]">
          <Mt4Chart />
        </div>
      </div>
      <div className="h-[2px] bg-[#e4e4e4]" />
      <div className="flex h-[17px] items-stretch border-t border-black bg-[#efefef] text-xs leading-4 text-[#7d7d7d]">
        <button className="pr-[9px] pl-[6px]">EURUSD,M5</button>
        <span className="mt-0.5 w-px bg-[#8b8b8b]" />
        <button className="px-[9px]">GBPUSD,H1</button>
        <span className="mt-0.5 w-px bg-[#8b8b8b]" />
        <button className="px-[9px]">EURUSD,H1 (visual)</button>
        <button className="-mt-px border-x border-black bg-white px-[9px] text-black">EURUSD,M5</button>
        <span className="ml-auto flex items-center gap-[14px] pr-2">
          <svg width="5" height="7"><path d="M4 0V7L0 3.500Z" fill="#9a9a9a" /></svg>
          <svg width="5" height="7"><path d="M0 0V7L4 3.500Z" fill="#9a9a9a" /></svg>
        </span>
      </div>
    </div>
  );
}

function Navigator() {
  return (
    <aside className="flex w-[54px] shrink-0 flex-col overflow-hidden border-l-4 border-[#efefef] bg-[#efefef]">
      <h2 className="h-[14px] bg-[#c8d2df] pl-0.5 text-[11px] leading-[14px] whitespace-nowrap text-[#222]">Навигатор</h2>
      <div className="border-l border-[#8b8b8b] bg-[#fbfbfb]">
        <svg width="49" height="350" viewBox="1551 514 49 350" className="block">
          <g stroke="#9a9a9a" strokeDasharray="1 1" fill="none">
            <path d="M1563.500 516V785M1563.500 798V862M1584.500 516V776M1584.500 804V864M1569 791.500H1576" />
            {Array.from({ length: 15 }, (_, i) => (
              <path key={i} d={`M1585 ${Math.round(526 + i * 17.7)}.5H1595`} />
            ))}
            {[809, 827, 845, 862].map((y) => (
              <path key={y} d={`M1585 ${y}.5H1595`} />
            ))}
          </g>
          {Array.from({ length: 15 }, (_, i) => (
            <rect key={i} x="1597" y={Math.round(518 + i * 17.7)} width="12" height="12" rx="1.500" fill="#fbe27a" stroke="#c4972b" />
          ))}
          <rect x="1560" y="788" width="8" height="8" fill="#fff" stroke="#8b8b8b" /><path d="M1562 792H1566" stroke="#333" />
          <path d="M1577 790L1584 797L1590 794V789Z" fill="#f6d545" stroke="#b98412" />
          <ellipse cx="1584" cy="788" rx="8" ry="3.500" fill="#6bb6e2" stroke="#3583b8" /><ellipse cx="1584" cy="785.500" rx="4" ry="3" fill="#8ccbee" stroke="#3583b8" />
          <path d="M1588 791L1592 795L1588 799L1584 795Z" fill="#f2cb3a" stroke="#b98412" /><circle cx="1601" cy="790" r="2.500" fill="#8a1f1f" />
          {[806, 824, 841, 859].map((y) => (
            <ellipse key={y} cx="1602" cy={y} rx="4.500" ry="3" fill="#6bb6e2" stroke="#3583b8" />
          ))}
        </svg>
      </div>
      <button className="ml-[2px] h-[19px] border-b border-l border-black bg-white pl-[10px] text-left text-xs leading-[18px] whitespace-nowrap text-[#1c1c1c]">
        Общие
      </button>
    </aside>
  );
}

export default function App() {
  return (
    <main className="min-h-screen overflow-hidden bg-[#efefef] font-['Roboto','Noto_Sans',sans-serif]">
      <Mt5 />
      <section>
        <header className="flex h-[31px] items-center gap-1 border-t border-[#b5b5b5] bg-[linear-gradient(90deg,#eef6e6_0%,#f6f3e8_18%,#f5f5ea_32%,#e9f5f2_40%,#eaf5f2_58%,#f1f4f0_72%,#f5f4e8_86%)] text-xs text-[#222]">
          <svg width="16" height="18" viewBox="0 0 16 18">
            <path d="M5 0C9 1 13 5 15 14L10 17H0V10Z" fill="#3f9a4a" /><path d="M8 17H15C15 12 13 10 11 9Z" fill="#2b62b8" /><path d="M0 12L4 17H0Z" fill="#2b62b8" />
            <circle cx="6.500" cy="9.500" r="5.500" fill="#fff" stroke="#e0b52c" strokeWidth="1.500" /><path d="M7.500 13V6L4 10.500H9.500" fill="none" stroke="#e08a1c" strokeWidth="1.300" />
          </svg>
          <h1>173589444: MetaQuotes-Demo - Демо Счет - MetaQuotes Software Corp. - EURUSD,M5</h1>
        </header>
        <div className="overflow-hidden"><Menu className="-ml-px h-5 gap-4" /></div>
        <div className="h-px bg-white" />
        <Mt4Toolbars />
        <div className="h-[2px] bg-[#55585f]" />
        <div className="flex">
          <ChartWindow />
          <Navigator />
        </div>
      </section>
    </main>
  );
}
